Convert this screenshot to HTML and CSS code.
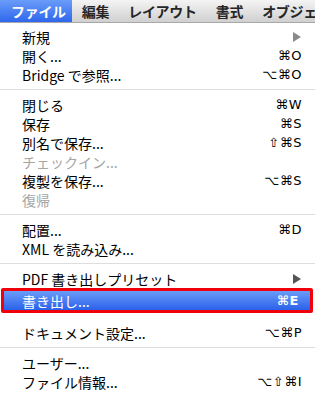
FILE: index.html
```html
<!DOCTYPE html>
<html lang="ja">
<head>
<meta charset="utf-8">
<link rel="stylesheet" href="styles.css">
</head>
<body>
<div class="menubar">
  <span class="mb-item active">ファイル</span>
  <span class="mb-item">編集</span>
  <span class="mb-item">レイアウト</span>
  <span class="mb-item">書式</span>
  <span class="mb-item">オブジェクト</span>
</div>
<div class="menu">
  <div class="row"><span class="label">新規</span><span class="arrow dim"></span></div>
  <div class="row"><span class="label">開く...</span><span class="key">⌘O</span></div>
  <div class="row"><span class="label">Bridge で参照...</span><span class="key">⌥⌘O</span></div>
  <div class="sep"></div>
  <div class="row"><span class="label">閉じる</span><span class="key">⌘W</span></div>
  <div class="row"><span class="label">保存</span><span class="key">⌘S</span></div>
  <div class="row"><span class="label">別名で保存...</span><span class="key">⇧⌘S</span></div>
  <div class="row disabled"><span class="label">チェックイン...</span></div>
  <div class="row"><span class="label">複製を保存...</span><span class="key">⌥⌘S</span></div>
  <div class="row disabled"><span class="label">復帰</span></div>
  <div class="sep"></div>
  <div class="row"><span class="label">配置...</span><span class="key">⌘D</span></div>
  <div class="row"><span class="label">XML を読み込み...</span></div>
  <div class="sep"></div>
  <div class="row"><span class="label">PDF 書き出しプリセット</span><span class="arrow"></span></div>
  <div class="row selected"><span class="label">書き出し...</span><span class="key">⌘E</span></div>
  <div class="row"><span class="label">ドキュメント設定...</span><span class="key">⌥⌘P</span></div>
  <div class="sep"></div>
  <div class="row"><span class="label">ユーザー...</span></div>
  <div class="row"><span class="label">ファイル情報...</span><span class="key">⌥⇧⌘I</span></div>
</div>
</body>
</html>
```

FILE: styles.css
```css
html, body {
  margin: 0;
  padding: 0;
  background: #fff;
  width: 315px;
  height: 394px;
  overflow: hidden;
}
body {
  font-family: "Noto Sans CJK JP", "DejaVu Sans", sans-serif;
  color: #000;
}
.menubar {
  height: 22px;
  display: flex;
  align-items: stretch;
  background: linear-gradient(#f4f4f4, #d0d0d0);
  border-bottom: 1px solid #a8a8a8;
  white-space: nowrap;
  overflow: hidden;
  font-size: 14px;
  font-weight: 700;
  letter-spacing: -0.3px;
  color: #262626;
}
.mb-item {
  display: flex;
  align-items: center;
  padding: 0 9px 0 10px;
  line-height: 1;
}
.mb-item:first-child {
  padding: 0 6px 0 11px;
}
.mb-item.active {
  background: linear-gradient(#6a9cf8, #2f67ec);
  color: #fff;
}
.menu {
  padding-top: 4px;
  font-size: 14px;
}
.row {
  height: 19px;
  display: flex;
  align-items: center;
  justify-content: space-between;
  padding: 0 13px 0 22px;
  line-height: 1;
  white-space: nowrap;
}
.row.disabled {
  color: #a5a5a5;
}
.key {
  font-family: "DejaVu Sans", sans-serif;
  font-size: 13px;
  letter-spacing: 0.5px;
}
.arrow {
  width: 0;
  height: 0;
  border-left: 8px solid #555;
  border-top: 5px solid transparent;
  border-bottom: 5px solid transparent;
  margin-right: 1px;
}
.arrow.dim {
  border-left-color: #8a8a8a;
}
.sep {
  height: 1px;
  background: #dedede;
  margin: 5px 0;
}
.row.selected {
  height: 19px;
  margin: 0 2px 10px 1px;
  padding: 0 11px 0 18px;
  border: 3px solid #f0000a;
  border-radius: 2px;
  background: linear-gradient(#6b9cf9, #2a61ea);
  color: #fff;
}
.row.selected .key {
  font-weight: bold;
}
```
